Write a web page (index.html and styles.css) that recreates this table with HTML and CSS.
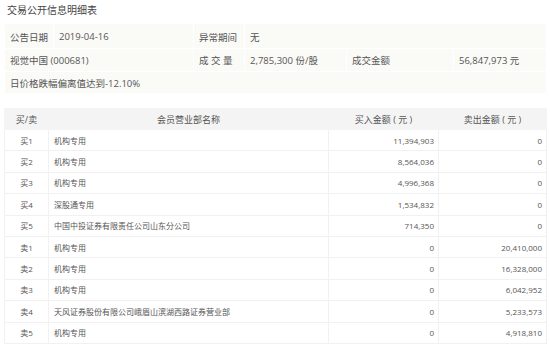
FILE: index.html
```html
<!DOCTYPE html>
<html lang="zh-CN">
<head>
    <meta charset="UTF-8">
    <title>交易公开信息明细表</title>
    <link rel="stylesheet" href="styles.css">
</head>
<body>
    <div class="page">
        <h1 class="page-title">交易公开信息明细表</h1>

        <table class="info-table">
            <colgroup>
                <col style="width:49px">
                <col style="width:140px">
                <col style="width:51px">
                <col style="width:102px">
                <col style="width:107px">
                <col style="width:93px">
            </colgroup>
            <tr class="row-first">
                <td>公告日期</td>
                <td>2019-04-16</td>
                <td>异常期间</td>
                <td colspan="3">无</td>
            </tr>
            <tr>
                <td colspan="2">视觉中国 (000681)</td>
                <td>成 交 量</td>
                <td>2,785,300 份/股</td>
                <td>成交金额</td>
                <td>56,847,973 元</td>
            </tr>
            <tr class="row-last">
                <td colspan="6">日价格跌幅偏离值达到-12.10%</td>
            </tr>
        </table>

        <table class="deal-table">
            <colgroup>
                <col style="width:44px">
                <col style="width:280px">
                <col style="width:110px">
                <col style="width:108px">
            </colgroup>
            <thead>
                <tr>
                    <th>买/卖</th>
                    <th>会员营业部名称</th>
                    <th>买入金额 ( 元 )</th>
                    <th>卖出金额 ( 元 )</th>
                </tr>
            </thead>
            <tbody>
                <tr><td class="side">买1</td><td class="name">机构专用</td><td class="num">11,394,903</td><td class="num">0</td></tr>
                <tr><td class="side">买2</td><td class="name">机构专用</td><td class="num">8,564,036</td><td class="num">0</td></tr>
                <tr><td class="side">买3</td><td class="name">机构专用</td><td class="num">4,996,368</td><td class="num">0</td></tr>
                <tr><td class="side">买4</td><td class="name">深股通专用</td><td class="num">1,534,832</td><td class="num">0</td></tr>
                <tr><td class="side">买5</td><td class="name">中国中投证券有限责任公司山东分公司</td><td class="num">714,350</td><td class="num">0</td></tr>
                <tr><td class="side">卖1</td><td class="name">机构专用</td><td class="num">0</td><td class="num">20,410,000</td></tr>
                <tr><td class="side">卖2</td><td class="name">机构专用</td><td class="num">0</td><td class="num">16,328,000</td></tr>
                <tr><td class="side">卖3</td><td class="name">机构专用</td><td class="num">0</td><td class="num">6,042,952</td></tr>
                <tr><td class="side">卖4</td><td class="name">天风证券股份有限公司峨眉山滨湖西路证券营业部</td><td class="num">0</td><td class="num">5,233,573</td></tr>
                <tr><td class="side">卖5</td><td class="name">机构专用</td><td class="num">0</td><td class="num">4,918,810</td></tr>
            </tbody>
        </table>
    </div>
</body>
</html>
```

FILE: styles.css
```css
* {
    margin: 0;
    padding: 0;
    box-sizing: border-box;
}

body {
    font-family: 'Open Sans', 'Noto Sans CJK SC', sans-serif;
    background: #fff;
    color: #555;
}

.page {
    width: 550px;
    padding: 0 4px;
}

.page-title {
    font-size: 10px;
    font-weight: 400;
    color: #444;
    line-height: 20px;
    height: 24px;
    padding-left: 3px;
}

/* summary block */
.info-table {
    width: 542px;
    table-layout: fixed;
    border-collapse: collapse;
    background: #fafaf7;
    font-size: 9.5px;
    color: #555;
}

.info-table td {
    height: 23px;
    padding: 0 5px;
    border: 1px solid #fff;
    white-space: nowrap;
}

.info-table .row-first td {
    border-top-color: #fafaf7;
    height: 24px;
}

.info-table .row-last td {
    height: 22px;
}

/* buy / sell detail */
.deal-table {
    width: 542px;
    margin-top: 14px;
    table-layout: fixed;
    border-collapse: collapse;
    font-size: 8px;
    color: #555;
}

.deal-table th {
    height: 21px;
    background: #f4f4f4;
    font-size: 9px;
    font-weight: 400;
    color: #555;
    border: 1px solid #f4f4f4;
    border-left-color: #fff;
}

.deal-table th:first-child {
    border-left-color: #f4f4f4;
}

.deal-table td {
    height: 21.4px;
    border: 1px solid #f1f1f1;
    white-space: nowrap;
}

.deal-table .side {
    text-align: center;
}

.deal-table .name {
    padding-left: 5px;
}

.deal-table .num {
    text-align: right;
    padding-right: 4px;
}
```
